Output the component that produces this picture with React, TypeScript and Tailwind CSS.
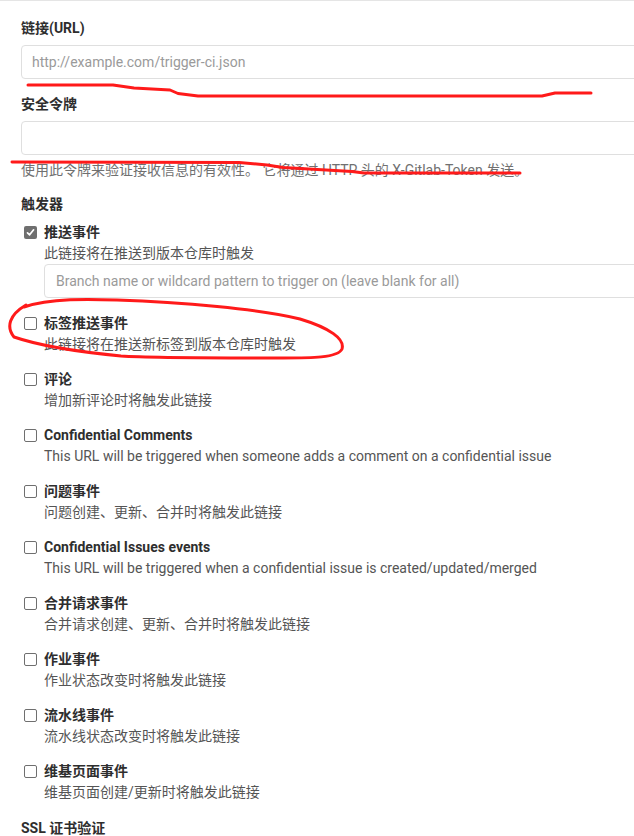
import React from "react"

const triggers = [
  { label: "标签推送事件", desc: "此链接将在推送新标签到版本仓库时触发" },
  { label: "评论", desc: "增加新评论时将触发此链接" },
  { label: "Confidential Comments", desc: "This URL will be triggered when someone adds a comment on a confidential issue" },
  { label: "问题事件", desc: "问题创建、更新、合并时将触发此链接" },
  { label: "Confidential Issues events", desc: "This URL will be triggered when a confidential issue is created/updated/merged" },
  { label: "合并请求事件", desc: "合并请求创建、更新、合并时将触发此链接" },
  { label: "作业事件", desc: "作业状态改变时将触发此链接" },
  { label: "流水线事件", desc: "流水线状态改变时将触发此链接" },
  { label: "维基页面事件", desc: "维基页面创建/更新时将触发此链接" },
]

function Box({ checked }: { checked?: boolean }) {
  if (checked) {
    return (
      <span className="flex h-[13px] w-[13px] items-center justify-center rounded-[2px] bg-[#6f6f6f]">
        <svg width="9" height="9" viewBox="0 0 9 9" fill="none">
          <path d="M1.5 4.8 L3.6 6.8 L7.6 1.8" stroke="#fff" strokeWidth="1.7" strokeLinecap="round" strokeLinejoin="round" />
        </svg>
      </span>
    )
  }
  return <span className="block h-[13px] w-[13px] rounded-[2px] border border-[#6f6f6f] bg-white" />
}

function TriggerRow({ label, desc, checked, children }: { label: string; desc: string; checked?: boolean; children?: React.ReactNode }) {
  return (
    <div className="flex">
      <div className="flex h-5 w-[23px] shrink-0 items-center pl-[3px]">
        <Box checked={checked} />
      </div>
      <div className="flex-1">
        <div className="font-bold leading-5 text-[#2e2e2e]">{label}</div>
        <div className="mt-[1px] leading-5 text-[#555]">{desc}</div>
        {children}
      </div>
    </div>
  )
}

const inputCls =
  "block h-[34px] w-full rounded-[4px] border border-[#dfdfdf] bg-white px-[10px] text-[14px] outline-none placeholder:text-[#9a9a9a]"

export default function App() {
  return (
    <div className="relative h-[836px] w-[634px] overflow-hidden border-t border-[#e5e5e5] bg-white font-['Roboto','Noto_Sans_CJK_SC',sans-serif] text-[14px] text-[#2e2e2e]">
      <div className="w-[720px] pl-[21px] pt-[17px]">
        {/* URL */}
        <div className="font-bold leading-5">链接(URL)</div>
        <input className={`mt-[7px] ${inputCls}`} placeholder="http://example.com/trigger-ci.json" />

        {/* token */}
        <div className="mt-[15px] font-bold leading-5">安全令牌</div>
        <input className={`mt-[7px] ${inputCls}`} />
        <p className="mt-[5px] leading-5 text-[#707070]">
          使用此令牌来验证接收信息的有效性。 它将通过 HTTP 头的 X-Gitlab-Token 发送。
        </p>

        {/* triggers */}
        <div className="mt-[14px] font-bold leading-5">触发器</div>
        <div className="mt-[8px] flex flex-col gap-[15px]">
          <TriggerRow label="推送事件" desc="此链接将在推送到版本仓库时触发" checked>
            <input
              className={`mt-[1px] ${inputCls} px-[11px]`}
              placeholder="Branch name or wildcard pattern to trigger on (leave blank for all)"
            />
          </TriggerRow>
          {triggers.map((t) => (
            <TriggerRow key={t.label} label={t.label} desc={t.desc} />
          ))}
        </div>

        <div className="mt-[16px] font-bold leading-5">SSL 证书验证</div>
      </div>

      {/* red marker annotations */}
      <svg className="pointer-events-none absolute left-0 top-0" width="634" height="836" fill="none">
        <g stroke="#ff1a1a" strokeWidth="3" strokeLinecap="round" strokeLinejoin="round">
          <path d="M28 84 L113 84 L134 87 L170 89 L178 92.5 L198 95 L542 95 L555 92 L591 92" />
          <path d="M12 161 L239 161.5 L267 164 L283 166.5 L352 170.5 L364 172 L520 172" />
          <path d="M24 306 C50 297 90 298 117 299 C180 301 260 308 300 318 C330 327 345 338 342 348 C338 357 310 357 283 357 C220 357 150 357 121 355 C80 351 40 345 14 336 C6 326 9 314 26 304" />
        </g>
      </svg>
    </div>
  )
}
